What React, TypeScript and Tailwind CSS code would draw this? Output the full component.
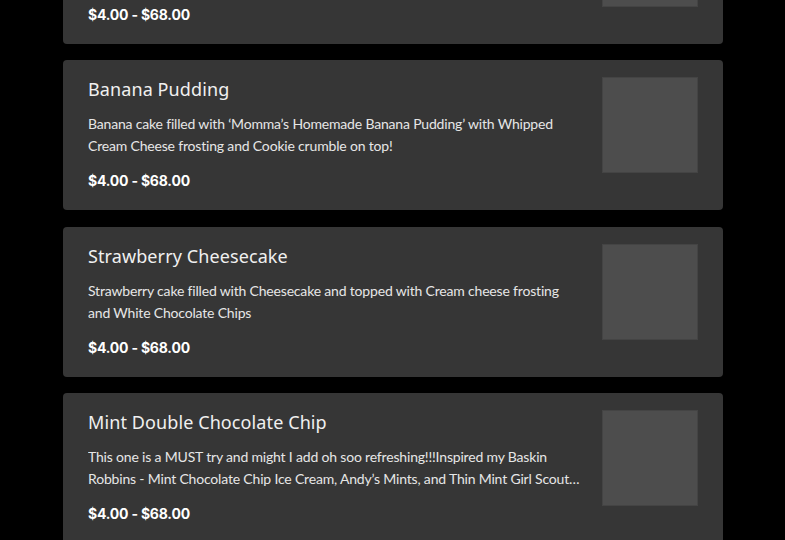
import React from "react";

type Item = { title: string; desc: string; price: string };

const items: Item[] = [
  {
    title: "Cookies and Cream",
    desc: "Chocolate cake filled with Cookies and Cream mousse and topped with Vanilla Buttercream and crushed Oreos",
    price: "$4.00 - $68.00",
  },
  {
    title: "Banana Pudding",
    desc: "Banana cake filled with \u2018Momma\u2019s Homemade Banana Pudding\u2019 with Whipped Cream Cheese frosting and Cookie crumble on top!",
    price: "$4.00 - $68.00",
  },
  {
    title: "Strawberry Cheesecake",
    desc: "Strawberry cake filled with Cheesecake and topped with Cream cheese frosting and White Chocolate Chips",
    price: "$4.00 - $68.00",
  },
  {
    title: "Mint Double Chocolate Chip",
    desc: "This one is a MUST try and might I add oh soo refreshing!!!Inspired my Baskin Robbins - Mint Chocolate Chip Ice Cream, Andy\u2019s Mints, and Thin Mint Girl Scout Cookies. Chocolate cake with mint chips and mint frosting.",
    price: "$4.00 - $68.00",
  },
];

function Card({ item }: { item: Item }) {
  return (
    <div className="flex h-[150px] shrink-0 gap-[20px] rounded-[4px] bg-[#363636] pl-[25px] pr-[25px] pt-[16px]">
      <div className="flex min-w-0 flex-1 flex-col">
        <div
          className="text-[18px] leading-[26px] tracking-[0.1px] text-[#f0f0f0]"
          style={{ fontFamily: '"Noto Sans", sans-serif' }}
        >
          {item.title}
        </div>
        <div
          className="mt-[11px] line-clamp-2 text-[14px] leading-[22px] tracking-[-0.18px] text-[#e6e6e6]"
          style={{ fontFamily: 'Lato, sans-serif' }}
        >
          {item.desc}
        </div>
        <div
          className="mt-[13px] text-[14px] font-bold leading-[22px] tracking-[-0.2px] text-white"
          style={{ fontFamily: 'Inter, sans-serif' }}
        >
          {item.price}
        </div>
      </div>
      <div className="mt-px h-[96px] w-[96px] shrink-0 border border-[#444] bg-[#4d4d4d]" />
    </div>
  );
}

export default function App() {
  return (
    <div className="h-[540px] w-[785px] overflow-hidden bg-black">
      <div className="ml-[63px] mt-[-106.5px] flex w-[660px] flex-col gap-[16.5px]">
        {items.map((it) => (
          <Card key={it.title} item={it} />
        ))}
      </div>
    </div>
  );
}
